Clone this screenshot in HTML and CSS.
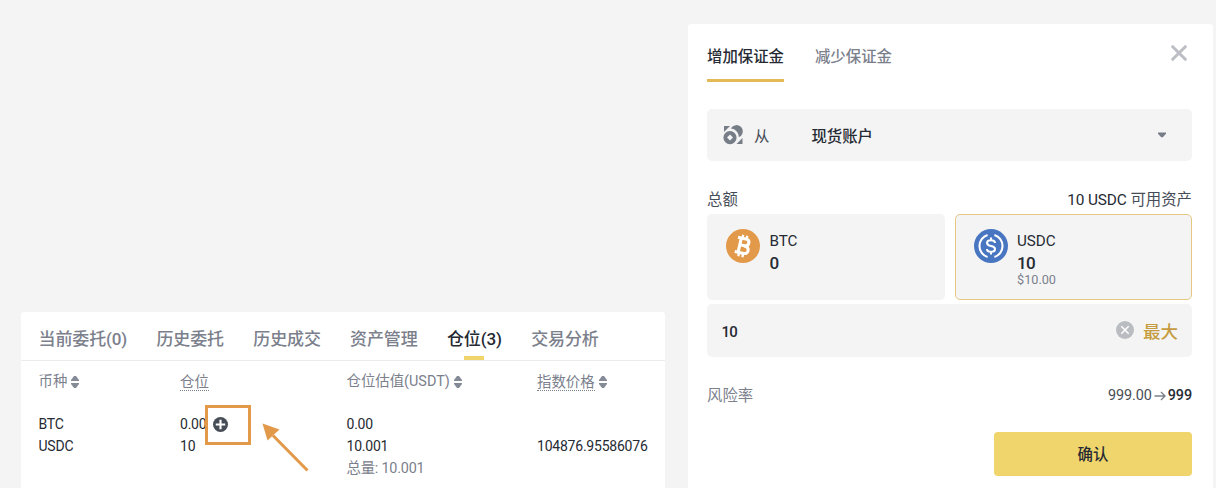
FILE: index.html
```html
<!DOCTYPE HTML>
<html lang="zh-CN">
<head>
<meta charset="utf-8">
<title>增加保证金</title>
<link rel="stylesheet" href="styles.css">
</head>

<body>
<div class="page">

<div class="positions">
    <div class="tabs">
        <span>当前委托(0)</span>
        <span>历史委托</span>
        <span>历史成交</span>
        <span>资产管理</span>
        <span class="active">仓位(3)</span>
        <span>交易分析</span>
    </div>
    <div class="row head">
        <div>币种<svg class="sort" viewBox="0 0 8 12"><path d="M0 5V4L3 0H5L8 4V5ZM0 7V8L3 12H5L8 8V7Z"/></svg></div>
        <div><span class="dotted">仓位</span></div>
        <div>仓位估值<span class="unit">(USDT)</span><svg class="sort" viewBox="0 0 8 12"><path d="M0 5V4L3 0H5L8 4V5ZM0 7V8L3 12H5L8 8V7Z"/></svg></div>
        <div><span class="dotted">指数价格</span><svg class="sort" viewBox="0 0 8 12"><path d="M0 5V4L3 0H5L8 4V5ZM0 7V8L3 12H5L8 8V7Z"/></svg></div>
    </div>
    <div class="row">
        <div>BTC<br>USDC</div>
        <div>0.00<svg class="plus" viewBox="0 0 14 14"><circle cx="7" cy="7" r="7"/><path d="M7 2.6V11.4M2.6 7H11.4"/></svg><br>10</div>
        <div>0.00<br>10.001<br><span class="total">总量: 10.001</span></div>
        <div><br>104876.95586076</div>
    </div>
    <div class="mark"></div>
    <svg class="arrow" viewBox="0 0 48 50"><path class="line" d="M11 12.5L45.5 47.5"/><path d="M0.5 0.5L17.5 6.5L5.5 17.5Z"/></svg>
</div>

<div class="dialog">
    <div class="dialog-head">
        <span class="active">增加保证金</span>
        <span>减少保证金</span>
        <svg class="close" viewBox="0 0 16 16"><path d="M1.7 1.7L14.3 14.3M14.3 1.7L1.7 14.3"/></svg>
    </div>

    <div class="select">
        <svg class="coins" viewBox="0 0 20 20"><path d="M1 1H7L1 7Z"/><path d="M19.5 19V13L13.5 19Z"/><path d="M8 3.6A6.2 6.2 0 1 1 15.8 12.1A8.4 8.4 0 0 0 8 3.6Z"/><path fill-rule="evenodd" d="M7 6A6.6 6.6 0 1 1 7 19.2A6.6 6.6 0 1 1 7 6ZM7 9.6L4 12.6L7 15.6L10 12.6Z"/></svg>
        <span class="from">从</span>
        <span class="account">现货账户</span>
        <svg class="caret" viewBox="0 0 8 6"><path d="M0 0.5H8V1.7L4.8 5.3H3.2L0 1.7Z"/></svg>
    </div>

    <div class="line-row amount">
        <span>总额</span>
        <span><span class="num">10 USDC</span> 可用资产</span>
    </div>

    <div class="assets">
        <div class="asset">
            <svg class="coin" viewBox="0 0 34 34"><circle cx="17" cy="17" r="17" fill="#e2994a"/>
                <g transform="rotate(13 17 17)" fill="none" stroke="#fff" stroke-width="3.1"><path d="M10.2 9.6H18.2Q22 9.6 22 12.9T18.2 16.4H14.2M18.2 16.7Q23 16.7 23 20.5T18.2 24.2H10.2M13.6 9V25"/><path stroke-width="2.3" d="M14.7 6V10M18.9 6V10M14.7 24V28M18.9 24V28"/></g></svg>
            <div>
                <div class="name">BTC</div>
                <div class="qty">0</div>
            </div>
        </div>
        <div class="asset selected">
            <svg class="coin" viewBox="0 0 34 34"><circle cx="17" cy="17" r="17" fill="#4876c1"/>
                <g fill="none" stroke="#fff" stroke-width="2.1"><path d="M13.6 6A11.5 11.5 0 0 0 13.6 28M20.4 6A11.5 11.5 0 0 1 20.4 28"/><path d="M21 14Q21 11.2 17 11.2T13.1 14Q13.1 16.3 17 17T21 20Q21 22.8 17 22.8T13 20M17 8.5V11.5M17 22.5V25.5"/></g></svg>
            <div>
                <div class="name">USDC</div>
                <div class="qty">10</div>
                <div class="usd">$10.00</div>
            </div>
        </div>
    </div>

    <div class="input">
        <span class="value">10</span>
        <svg class="clear" viewBox="0 0 18 18"><circle cx="9" cy="9" r="9"/><path d="M5.3 5.3L12.7 12.7M12.7 5.3L5.3 12.7"/></svg>
        <span class="max">最大</span>
    </div>

    <div class="line-row risk">
        <span>风险率</span>
        <span class="ratio">999.00<svg class="to" viewBox="0 0 12 10"><path d="M0.5 5H11M7 1L11 5L7 9"/></svg><b>999</b></span>
    </div>

    <div class="confirm">确认</div>
</div>

</div>
</body>
</html>
```

FILE: styles.css
```css
body {margin: 0; background: #f4f4f4; font-family: Roboto, "Noto Sans CJK SC", sans-serif; color: #262a33;}
svg {display: block; flex: none;}
.page {display: flex; align-items: stretch; height: 488px; overflow: hidden;}

/* positions table */
.positions {position: relative; width: 644px; margin: 312px 0 0 21px; background: #fff; border-radius: 3px 3px 0 0;}
.tabs {display: flex; gap: 29.3px; height: 48px; padding-left: 17.5px; border-bottom: 1px solid #ececee; font-size: 17px; line-height: 54px; font-weight: 500; color: #7b808c; white-space: nowrap;}
.tabs span {letter-spacing: -0.12px;}
.tabs .active {color: #262a33; background: linear-gradient(#f0d56c, #f0d56c) center bottom / 20px 4px no-repeat;}
.row {display: grid; grid-template-columns: 141.5px 166.5px 190.5px 1fr; padding-left: 17.5px; font-size: 14px; line-height: 22px; letter-spacing: -0.22px;}
.row > div {white-space: nowrap;}
.head {height: 40px; padding-bottom: 12px; font-size: 14.4px; line-height: 42px; letter-spacing: 0; color: #7b808c;}
.head > div {display: flex; align-items: center;}
.sort {width: 8px; height: 12px; margin: -1px 0 0 4px; fill: #858b96;}
.dotted {line-height: 15px; padding-top: 1px; border-bottom: 1px dotted #7b808c;}
.plus {display: inline-block; width: 15px; height: 15px; margin-left: 7px; vertical-align: -3px; fill: #474d57;}
.plus path {stroke: #fff; stroke-width: 2;}
.total {font-size: 14.4px; color: #7b808c;}
.mark {position: absolute; left: 184px; top: 93px; width: 40px; height: 34px; border: 3px solid #e2994a;}
.arrow {position: absolute; left: 241px; top: 111px; width: 48px; height: 50px; fill: #e2994a;}
.arrow .line {stroke: #e2994a; stroke-width: 3;}

/* margin dialog */
.dialog {width: 485px; margin: 24px 0 0 23px; padding: 0 21px 0 19px; background: #fff; border-radius: 3px 3px 0 0;}
.dialog-head {display: flex; gap: 31px; height: 58px; font-size: 15.4px; line-height: 67px; font-weight: 500; color: #7b808c;}
.dialog-head .active {color: #262a33; border-bottom: 3px solid #e4ba57; height: 55px;}
.close {width: 16px; height: 16px; margin: 21px 5px 0 auto; fill: none; stroke: #bcbec5; stroke-width: 3; stroke-linecap: round;}
.select {display: flex; align-items: center; height: 52px; margin-top: 27px; padding: 0 26px 0 16px; box-sizing: border-box; background: #f4f4f4; border-radius: 5px; font-size: 15.4px;}
.coins {width: 20px; height: 20px; fill: #767d87;}
.from {margin-left: 11px; color: #474d57;}
.account {margin-left: 42px; font-weight: 500;}
.caret {width: 8px; height: 6px; margin-left: auto; fill: #767d87;}
.line-row {display: flex; justify-content: space-between; align-items: center; font-size: 15.4px;}
.amount {height: 30px; margin-top: 24px; line-height: 32px; color: #474d57;}
.amount .num {color: #262a33; letter-spacing: -0.15px;}
.assets {display: flex; gap: 10px;}
.asset {display: flex; flex: 1; height: 86px; margin-top: -1px; padding: 15px 19px 0; box-sizing: border-box; background: #f4f4f4; border-radius: 5px;}
.selected {padding: 14px 18px 0; border: 1px solid #e5c983;}
.coin {width: 34px; height: 34px; margin-right: 9.5px;}
.name {margin-top: 1px; font-size: 15.2px; line-height: 22px;}
.qty {font-size: 17px; line-height: 22px; font-weight: 500; letter-spacing: -0.6px;}
.usd {font-size: 12.7px; line-height: 12px; color: #7b808c;}
.input {display: flex; align-items: center; height: 53px; margin-top: 4px; padding: 0 14px 0 14.5px; box-sizing: border-box; background: #f4f4f4; border-radius: 5px; font-size: 15px; font-weight: 500;}
.value {margin-top: 2px; letter-spacing: -0.7px;}
.clear {width: 18px; height: 18px; margin: -1px 9px 0 auto; fill: #b9bcc1;}
.clear path {stroke: #fff; stroke-width: 1.5;}
.max {font-size: 17.5px; color: #c69c41;}
.risk {height: 30px; margin-top: 24px; line-height: 32px; color: #7b808c;}
.ratio {display: flex; align-items: center; font-size: 14.4px; letter-spacing: -0.1px; color: #474d57;}
.ratio b {font-weight: 500; color: #262a33;}
.to {width: 12px; height: 10px; margin: 0 2px; fill: none; stroke: #7b808c; stroke-width: 1.4;}
.confirm {width: 198px; height: 44px; margin: 21px 0 0 auto; background: #f0d56c; border-radius: 4px; text-align: center; font-size: 15.4px; line-height: 47px; font-weight: 500;}
```
